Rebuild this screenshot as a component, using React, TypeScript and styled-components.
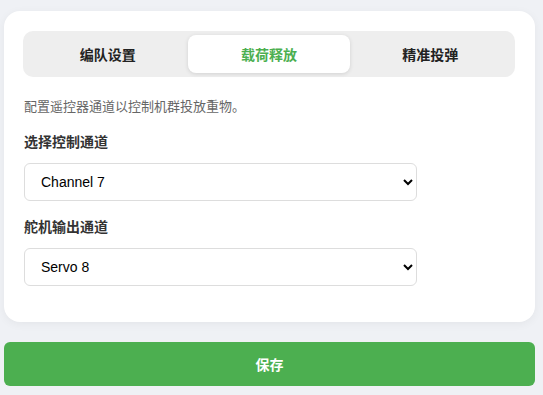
import React, { useState } from "react";
import styled, { createGlobalStyle } from "styled-components";

const GlobalStyle = createGlobalStyle`
  html, body {
    margin: 0;
    padding: 0;
    background: #eff1f5;
    font-family: "Liberation Sans", "Noto Sans CJK SC", sans-serif;
  }
  * { box-sizing: border-box; }
`;

const Page = styled.div`
  padding: 11px 8px 10px 4px;
  display: flex;
  flex-direction: column;
  gap: 20px;
`;

const Card = styled.div`
  background: #fff;
  border-radius: 16px;
  padding: 20px 20px 20px 19px;
  box-shadow: 0 2px 10px rgba(0, 0, 0, 0.05);
`;

const Tabs = styled.div`
  display: grid;
  grid-template-columns: repeat(3, 1fr);
  background: #eeeeee;
  border-radius: 10px;
  padding: 4px;
  height: 46px;
`;

const Tab = styled.button<{ $active?: boolean }>`
  border: none;
  border-radius: 8px;
  background: ${(p) => (p.$active ? "#fff" : "transparent")};
  box-shadow: ${(p) => (p.$active ? "0 1px 4px rgba(0,0,0,0.12)" : "none")};
  color: ${(p) => (p.$active ? "#4caf50" : "#222")};
  font-family: inherit;
  font-size: 14px;
  font-weight: 700;
  cursor: pointer;
  padding: 0;
`;

const Description = styled.p`
  margin: 20px 0 15px 1px;
  font-size: 13px;
  line-height: 20px;
  color: #666;
`;

const Group = styled.div`
  margin-bottom: 16px;
  padding-left: 1px;
`;

const Label = styled.label`
  display: block;
  font-size: 14px;
  line-height: 21px;
  font-weight: 700;
  color: #333;
  margin-bottom: 10px;
`;

const Select = styled.select`
  width: 80%;
  height: 38px;
  border: 1px solid #ddd;
  border-radius: 6px;
  background-color: #fff;
  padding: 0 8px 0 12px;
  font-family: "Liberation Sans", Arial, sans-serif;
  font-size: 14px;
  color: #000;
`;

const SaveButton = styled.button`
  height: 44px;
  border: none;
  border-radius: 6px;
  background: #4caf50;
  color: #fff;
  font-family: inherit;
  font-size: 14px;
  font-weight: 700;
  cursor: pointer;
`;

const tabs = ["编队设置", "载荷释放", "精准投弹"];

export default function App() {
  const [active, setActive] = useState(1);
  const [channel, setChannel] = useState("7");
  const [servo, setServo] = useState("8");
  return (
    <>
      <GlobalStyle />
      <Page>
        <Card>
          <Tabs>
            {tabs.map((t, i) => (
              <Tab key={t} $active={i === active} onClick={() => setActive(i)}>
                {t}
              </Tab>
            ))}
          </Tabs>
          <Description>配置遥控器通道以控制机群投放重物。</Description>
          <Group>
            <Label>选择控制通道</Label>
            <Select value={channel} onChange={(e) => setChannel(e.target.value)}>
              {Array.from({ length: 16 }, (_, i) => (
                <option key={i} value={String(i + 1)}>
                  Channel {i + 1}
                </option>
              ))}
            </Select>
          </Group>
          <Group>
            <Label>舵机输出通道</Label>
            <Select value={servo} onChange={(e) => setServo(e.target.value)}>
              {Array.from({ length: 16 }, (_, i) => (
                <option key={i} value={String(i + 1)}>
                  Servo {i + 1}
                </option>
              ))}
            </Select>
          </Group>
        </Card>
        <SaveButton>保存</SaveButton>
      </Page>
    </>
  );
}
